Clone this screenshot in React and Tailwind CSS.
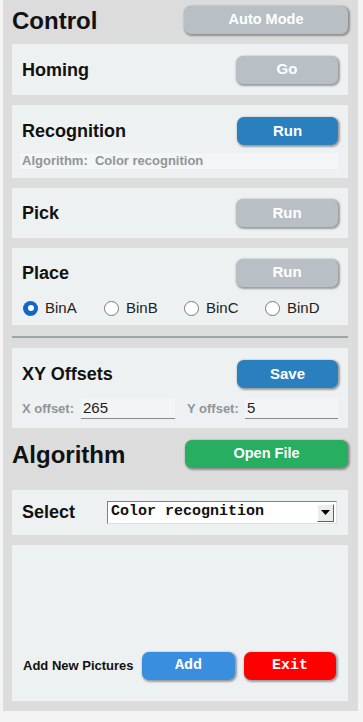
import React, { useState } from 'react';

const btnBase =
  'flex items-center justify-center h-[28px] rounded-[7px] text-white font-bold shadow-[1px_1px_2px_1px_rgba(0,0,0,0.35)]';

const Card = ({ className = '', children }) => (
  <div className={`bg-[#eef1f2] px-[10px] ${className}`}>{children}</div>
);

const Radio = ({ label, checked, onChange }) => (
  <label className="flex items-center gap-[7px] cursor-pointer" onClick={onChange}>
    {checked ? (
      <span className="w-[15px] h-[15px] rounded-full bg-[#1166c8] flex items-center justify-center">
        <span className="w-[6px] h-[6px] rounded-full bg-white" />
      </span>
    ) : (
      <span className="w-[15px] h-[15px] rounded-full bg-white border border-[#7a7a7a]" />
    )}
    <span className="text-[15px] text-[#222]">{label}</span>
  </label>
);

export default function App() {
  const [bin, setBin] = useState('BinA');
  const [xOff, setXOff] = useState('265');
  const [yOff, setYOff] = useState('5');

  return (
    <div
      className="h-[722px] bg-[#f4f4f4]"
      style={{ fontFamily: '"Liberation Sans", Arial, sans-serif' }}
    >
      <div className="ml-[3px] w-[355px] h-[711px] bg-[#dcdcdc] pt-[6px] pl-[9px] pr-[10px]">
        {/* Control header */}
        <div className="flex items-center justify-between h-[28px]">
          <h1 className="text-[24px] font-bold text-[#111] leading-none mt-[2px]">Control</h1>
          <button className={`${btnBase} w-[164px] bg-[#b8c0c6] text-[14.5px]`}>Auto Mode</button>
        </div>

        <div className="mt-[10px] flex flex-col gap-[10px]">
          <Card className="h-[51px] flex items-center justify-between">
            <span className="text-[18px] font-bold text-[#111] mt-[2px]">Homing</span>
            <button className={`${btnBase} w-[102px] bg-[#b8c0c6] text-[15px]`}>Go</button>
          </Card>

          <Card className="h-[73px] pt-[12px]">
            <div className="flex items-center justify-between">
              <span className="text-[18px] font-bold text-[#111]">Recognition</span>
              <button className={`${btnBase} w-[101px] h-[27px] bg-[#2a7fbe] text-[15px]`}>Run</button>
            </div>
            <div className="mt-[8px] h-[16px] -ml-[2px] pl-[2px] bg-[#f3f5f6] flex items-center text-[13px] font-bold text-[#8f959a]">
              Algorithm:&nbsp; Color recognition
            </div>
          </Card>

          <Card className="h-[50px] flex items-center justify-between">
            <span className="text-[18px] font-bold text-[#111]">Pick</span>
            <button className={`${btnBase} w-[102px] bg-[#b8c0c6] text-[15px]`}>Run</button>
          </Card>

          <Card className="h-[77px] pt-[10px]">
            <div className="flex items-center justify-between">
              <span className="text-[18px] font-bold text-[#111] mt-[2px]">Place</span>
              <button className={`${btnBase} w-[102px] bg-[#b8c0c6] text-[15px]`}>Run</button>
            </div>
            <div className="mt-[10px] grid grid-cols-[81px_80px_81px_80px] pl-[1px]">
              {['BinA', 'BinB', 'BinC', 'BinD'].map((b) => (
                <Radio key={b} label={b} checked={bin === b} onChange={() => setBin(b)} />
              ))}
            </div>
          </Card>
        </div>

        <div className="mt-[11px] h-[2px] bg-[#9aa5a9]" />

        <Card className="mt-[10px] h-[80px] pt-[12px]">
          <div className="flex items-center justify-between">
            <span className="text-[18px] font-bold text-[#111]">XY Offsets</span>
            <button className={`${btnBase} w-[101px] h-[27px] bg-[#2a7fbe] text-[15px]`}>Save</button>
          </div>
          <div className="mt-[10px] flex items-center">
            <span className="text-[13px] font-bold text-[#8f959a] w-[59px]">X offset:</span>
            <input
              value={xOff}
              onChange={(e) => setXOff(e.target.value)}
              className="w-[94px] h-[21px] bg-[#f2f4f5] border-b border-[#8a8a8a] px-[2px] text-[15px] text-[#222] outline-none"
            />
            <span className="ml-[12px] text-[13px] font-bold text-[#8f959a] w-[58px]">Y offset:</span>
            <input
              value={yOff}
              onChange={(e) => setYOff(e.target.value)}
              className="w-[93px] h-[21px] bg-[#f2f4f5] border-b border-[#8a8a8a] px-[2px] text-[15px] text-[#222] outline-none"
            />
          </div>
        </Card>

        {/* Algorithm header */}
        <div className="mt-[12px] flex items-center justify-between h-[28px]">
          <h2 className="text-[24px] font-bold text-[#111] leading-none mt-[2px]">Algorithm</h2>
          <button className={`${btnBase} w-[163px] bg-[#27ae60] text-[14.5px]`}>Open File</button>
        </div>

        <Card className="mt-[22px] h-[45px] flex items-center">
          <span className="text-[18px] font-bold text-[#111] w-[85px]">Select</span>
          <div className="w-[230px] h-[23px] bg-white border-t border-l border-[#808080] border-b border-r border-b-[#e0e0e0] border-r-[#e0e0e0] flex items-center justify-between pl-[3px] pr-[2px]">
            <span
              className="text-[15px] font-bold text-[#111]"
              style={{ fontFamily: '"Liberation Mono", monospace' }}
            >
              Color recognition
            </span>
            <span className="w-[17px] h-[18px] bg-[#ececec] border-t border-l border-white border-b border-r border-b-[#606060] border-r-[#606060] flex items-center justify-center">
              <svg width="9" height="5" viewBox="0 0 9 5">
                <path d="M0 0h9L4.5 5z" fill="#000" />
              </svg>
            </span>
          </div>
        </Card>

        <Card className="mt-[10px] h-[156px] flex items-end pb-[21px]">
          <div className="flex items-center w-full">
            <span className="text-[13px] font-bold text-[#111] w-[120px] pl-[1px]">Add New Pictures</span>
            <button
              className={`${btnBase} w-[93px] bg-[#3a8ee0] text-[15px]`}
              style={{ fontFamily: '"Liberation Mono", monospace' }}
            >
              Add
            </button>
            <button
              className={`${btnBase} ml-[9px] w-[92px] bg-[#ff0000] text-[15px]`}
              style={{ fontFamily: '"Liberation Mono", monospace' }}
            >
              Exit
            </button>
          </div>
        </Card>
      </div>
    </div>
  );
}
